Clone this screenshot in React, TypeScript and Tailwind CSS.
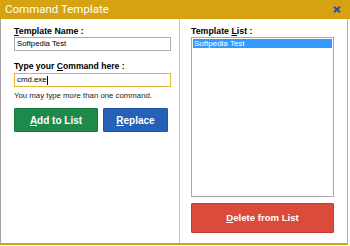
import React from 'react';

const ui = { fontFamily: '"Liberation Sans", Arial, sans-serif' };

function U({ c }: { c: string }) {
  return <span className="underline underline-offset-[1px]">{c}</span>;
}

export default function CommandTemplate() {
  return (
    <div className="w-[350px] h-[246px] bg-white flex flex-col overflow-hidden" style={ui}>
      {/* title bar */}
      <div className="h-[19px] bg-[#d5a312] flex items-center justify-between pl-[5px] pr-[9px]">
        <span className="text-white text-[11.5px] leading-none" style={{ fontFamily: 'Roboto, sans-serif' }}>
          Command Template
        </span>
        <svg width="8" height="7" viewBox="0 0 8 7">
          <path d="M1 0.8 L7 6.2 M7 0.8 L1 6.2" stroke="#2b4fa3" strokeWidth="2" />
        </svg>
      </div>

      <div className="flex-1 flex border-l border-l-[#a3a3a3] border-r border-r-[#b0b0b0] border-b-2 border-b-[#d5a312] mr-[2px] mb-[1px]">
        {/* left side */}
        <div className="w-[179px] border-r border-r-[#c4c4c4] pl-[13px] pt-[7px] flex flex-col">
          <div className="text-[8.8px] leading-[11px] font-bold text-black mt-[0px]">
            <U c="T" />emplate Name :
          </div>
          <div className="w-[157px] h-[14px] border border-[#ababab] flex items-center pl-[2px] text-[7.8px] text-black">
            Softpedia Test
          </div>
          <div className="text-[8.6px] leading-[11px] font-bold text-black mt-[10px]">
            Type your <U c="C" />ommand here :
          </div>
          <div className="w-[157px] h-[14px] mt-[1px] border border-[#e2b634] flex items-center pl-[2px] text-[7.8px] text-black">
            cmd.exe<span className="w-px h-[9px] bg-black ml-[1px]" />
          </div>
          <div className="text-[7.8px] leading-[10px] text-[#222] mt-[4px]">You may type more than one command.</div>
          <div className="flex gap-[5px] mt-[7px]">
            <div className="w-[84px] h-[24px] bg-[#1d8a4b] border border-[#167a3f] rounded-[1px] flex items-center justify-center text-white font-bold text-[10px]">
              <U c="A" />dd to List
            </div>
            <div className="w-[65px] h-[24px] bg-[#2561b6] border border-[#1d54a4] rounded-[1px] flex items-center justify-center text-white font-bold text-[10px]">
              <U c="R" />eplace
            </div>
          </div>
        </div>

        {/* right side */}
        <div className="flex-1 pl-[11px] pt-[7px] flex flex-col">
          <div className="text-[8.8px] leading-[11px] font-bold text-black">
            Template <U c="L" />ist :
          </div>
          <div className="w-[143px] h-[160px] border border-[#a8a8a8] p-px">
            <div className="h-[9px] bg-[#3399ff] text-white text-[8px] leading-[9px] pl-[1px]">Softpedia Test</div>
          </div>
          <div className="w-[143px] h-[30px] mt-[6px] bg-[#dc4a3b] border border-[#c73b2e] rounded-[1px] flex items-center justify-center text-white font-bold text-[9.6px]">
            <U c="D" />elete from List
          </div>
        </div>
      </div>
    </div>
  );
}
